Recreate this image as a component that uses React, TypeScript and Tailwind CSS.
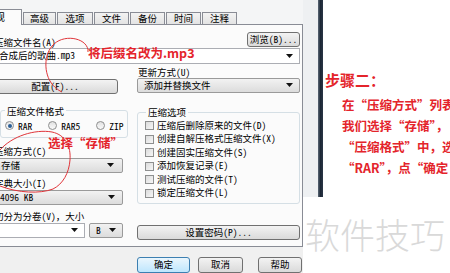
import React from "react";

const tabs = [
  { label: "高级", w: "w-[33px]" },
  { label: "选项", w: "w-[36px]" },
  { label: "文件", w: "w-[35px]" },
  { label: "备份", w: "w-[35px]" },
  { label: "时间", w: "w-[35px]" },
  { label: "注释", w: "w-[35px]" },
];

const options = [
  "压缩后删除原来的文件(D)",
  "创建自解压格式压缩文件(X)",
  "创建固实压缩文件(S)",
  "添加恢复记录(E)",
  "测试压缩的文件(T)",
  "锁定压缩文件(L)",
];

function Arrow() {
  return (
    <svg width="7" height="4" viewBox="0 0 7 4" className="shrink-0">
      <path d="M0 0h7L3.5 4z" fill="#111" />
    </svg>
  );
}

function Combo({ text, white, className = "" }: { text: string; white?: boolean; className?: string }) {
  return (
    <div
      className={`flex items-center justify-between px-[6px] leading-none ${
        white
          ? "bg-white border border-[#abadb3]"
          : "bg-gradient-to-b from-[#f2f2f2] to-[#dcdcdc] border border-[#9a9a9a] rounded-[2px]"
      } ${className}`}
    >
      <span className="whitespace-nowrap">{text}</span>
      <Arrow />
    </div>
  );
}

function Btn({ label, className = "" }: { label: string; className?: string }) {
  return (
    <div
      className={`flex items-center justify-center leading-none bg-gradient-to-b from-[#f3f3f3] to-[#dadada] border border-[#707070] rounded-[3px] whitespace-nowrap ${className}`}
    >
      {label}
    </div>
  );
}

function Radio({ label, checked }: { label: string; checked?: boolean }) {
  return (
    <div className="flex items-center gap-[4px]">
      <div className="w-[9px] h-[9px] rounded-full border border-[#8e8f8f] bg-gradient-to-b from-[#e2e2e2] to-[#fafafa] flex items-center justify-center">
        {checked && <div className="w-[4px] h-[4px] rounded-full bg-[#2c5f96]" />}
      </div>
      <span>{label}</span>
    </div>
  );
}

export default function App() {
  return (
    <div className="relative w-[450px] h-[273px] overflow-hidden bg-white flex text-black">
      {/* dialog */}
      <div className="w-[327px] -ml-[24px] shrink-0 bg-[#f0f0f0] flex flex-col text-[9.5px] font-['Noto_Sans_Mono_CJK_SC','Liberation_Mono','Noto_Sans_CJK_SC',monospace]">
        <div className="h-[25px] flex items-end gap-px bg-[#f4f5f6] border-b border-[#898c95]">
          <div className="w-[46px] h-[16px] -mb-px bg-[#fbfbfb] border-t border-r border-[#898c95] flex items-center justify-end pr-[16px] text-[10.5px] leading-none">
            常规
          </div>
          {tabs.map((t) => (
            <div
              key={t.label}
              className={`${t.w} h-[12px] border-t border-l border-r border-[#898c95] bg-gradient-to-b from-[#f3f3f3] to-[#e3e3e3] flex items-center justify-center text-[9.5px] leading-none`}
            >
              {t.label}
            </div>
          ))}
        </div>

        <div className="h-[224px] bg-[#fbfbfb] border-r border-b border-[#898c95] pl-[16px] pr-[2px] flex flex-col">
          <div className="h-[23px] flex items-end justify-between">
            <span className="leading-[12px] ml-[2px]">压缩文件名(A)</span>
            <Btn label="浏览(B)..." className="w-[53px] h-[15px] mb-px" />
          </div>
          <Combo text="合成后的歌曲.mp3" white className="h-[16px] px-[5px]" />

          <div className="flex mt-[2px]">
            <div className="w-[131px] pt-[13px]">
              <Btn label="配置(F)..." className="h-[15px] w-[126px]" />
            </div>
            <div className="w-[163px] ml-auto flex flex-col">
              <span className="leading-[12px] h-[12px] pl-px">更新方式(U)</span>
              <Combo text="添加并替换文件" className="h-[15px] px-[3px]" />
            </div>
          </div>

          <div className="flex mt-[11px]">
            <div className="w-[131px] flex flex-col">
              <fieldset className="ml-[8px] w-[123px] border border-[#d5dfe5] rounded-[3px] px-[3px] pb-[4px]">
                <legend className="leading-[12px] px-[2px] ml-[1px]">压缩文件格式</legend>
                <div className="h-[14px] mt-[2px] flex items-center gap-[16px] pl-px">
                  <Radio label="RAR" checked />
                  <Radio label="RAR5" />
                  <Radio label="ZIP" />
                </div>
              </fieldset>
              <span className="leading-[12px] mt-[7px] ml-[2px]">压缩方式(C)</span>
              <Combo text="存储" className="h-[15px] mt-px px-[8px]" />
              <span className="leading-[12px] mt-[4px] ml-[2px]">字典大小(I)</span>
              <Combo text="4096 KB" className="h-[15px] mt-px px-[7px]" />
              <span className="leading-[12px] mt-[5px] ml-[2px] whitespace-nowrap">切分为分卷(V)，大小</span>
              <div className="flex mt-px gap-[4px]">
                <Combo text="" white className="w-[93px] h-[15px] px-[4px]" />
                <Combo text="B" className="w-[34px] h-[15px] px-[4px]" />
              </div>
            </div>
            <div className="w-[163px] ml-auto flex flex-col mt-[2px]">
              <fieldset className="border border-[#d5dfe5] rounded-[3px] px-[7px] pb-[3px]">
                <legend className="leading-[11px] px-[2px] ml-[1px]">压缩选项</legend>
                <div className="pt-px">
                  {options.map((o) => (
                    <div key={o} className="h-[13.5px] flex items-center gap-[3px]">
                      <div className="w-[9px] h-[9px] border border-[#8e8f8f] bg-gradient-to-br from-[#dcdcdc] to-[#f6f6f6]" />
                      <span className="leading-none whitespace-nowrap">{o}</span>
                    </div>
                  ))}
                </div>
              </fieldset>
              <Btn label="设置密码(P)..." className="h-[15px] mt-[21px]" />
            </div>
          </div>
        </div>

        <div className="flex pt-[10px] pl-[161px]">
          <div className="w-[53px] h-[16px] border border-[#3c7fb1] rounded-[3px] bg-gradient-to-b from-[#eaf6fd] to-[#bee6fd] flex items-center justify-center leading-none">
            确定
          </div>
          <Btn label="取消" className="w-[45px] h-[16px] ml-[8px]" />
          <Btn label="帮助" className="w-[44px] h-[16px] ml-[15px]" />
        </div>
      </div>

      {/* window edge */}
      <div className="flex h-[197px] shrink-0">
        <div className="w-[15px] bg-[#eef0f2]" />
        <div className="w-[5px] bg-gradient-to-r from-[#5d6a78] via-[#1c2735] to-[#2a3646]" />
      </div>

      {/* annotation */}
      <div className="flex-1 pt-[70px] text-[#e4242b] font-bold whitespace-nowrap font-['Noto_Sans_CJK_SC',sans-serif]">
        <div className="text-[15px] leading-[20px] ml-[2px]">步骤二：</div>
        <div className="mt-[4px] pl-[19px] text-[12.5px] leading-[21px]">
          <div>在“压缩方式”列表</div>
          <div>我们选择“存储”，</div>
          <div>“压缩格式”中，选</div>
          <div>“RAR”，点“确定</div>
        </div>
      </div>

      {/* red notes drawn over dialog */}
      <div className="absolute left-[88px] top-[45px] text-[12.5px] leading-[16px] font-bold text-[#e4242b] whitespace-nowrap font-['Noto_Sans_CJK_SC',sans-serif]">
        将后缀名改为.mp3
      </div>
      <div className="absolute left-[48px] top-[135px] text-[12.5px] leading-[16px] font-bold text-[#e4242b] whitespace-nowrap font-['Noto_Sans_CJK_SC',sans-serif]">
        选择“存储”
      </div>
      <svg className="absolute left-0 top-0 pointer-events-none" width="450" height="273" viewBox="0 0 450 273">
        <path
          d="M88 52 C89 39 66 33 54 44 C43 54 44 74 52 84 C56 89 60 91 62 92"
          fill="none"
          stroke="#e0353a"
          strokeWidth="1"
        />
        <path
          d="M0 150 C12 136 35 129 52 132 C66 135 71 147 70 160 C69 173 63 184 53 189 C40 194 18 193 0 186"
          fill="none"
          stroke="#e0353a"
          strokeWidth="1"
        />
      </svg>

      {/* watermark */}
      <div className="absolute left-[305px] top-[212px] text-[35px] leading-[44px] text-[#d9d9d9] font-light whitespace-nowrap font-['Noto_Sans_CJK_SC',sans-serif]">
        软件技巧
      </div>
    </div>
  );
}
